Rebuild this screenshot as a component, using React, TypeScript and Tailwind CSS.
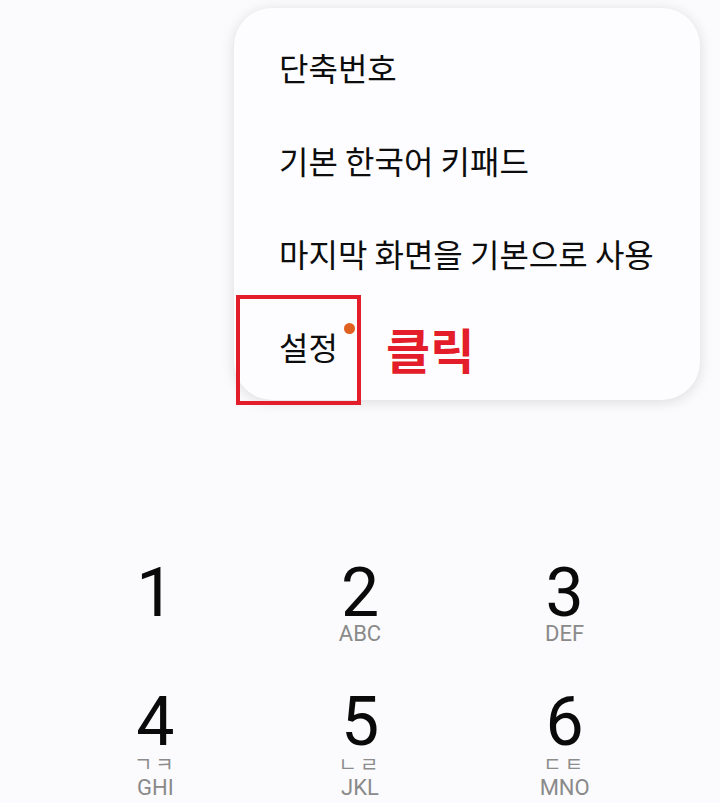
const menuItems = ["단축번호", "기본 한국어 키패드", "마지막 화면을 기본으로 사용", "설정"];

const keys = [
  { digit: "1", jamo: "", letters: "" },
  { digit: "2", jamo: "", letters: "ABC" },
  { digit: "3", jamo: "", letters: "DEF" },
  { digit: "4", jamo: "ㄱㅋ", letters: "GHI" },
  { digit: "5", jamo: "ㄴㄹ", letters: "JKL" },
  { digit: "6", jamo: "ㄷㅌ", letters: "MNO" },
];

function Key({ digit, jamo, letters }: { digit: string; jamo: string; letters: string }) {
  return (
    <div className="flex h-[129px] flex-col items-center">
      <span className="font-['Roboto',sans-serif] text-[68px] font-normal leading-[60px] text-[#0a0a0a]">
        {digit}
      </span>
      {jamo && (
        <span className="mt-[2px] font-['Noto_Sans_CJK_KR',sans-serif] text-[20px] leading-none tracking-[3px] text-[#8c8c8c]">
          {jamo}
        </span>
      )}
      {letters && (
        <span
          className={`font-['Roboto',sans-serif] text-[22px] leading-none text-[#8a8a8a] ${
            jamo ? "mt-[3px]" : "mt-0"
          }`}
        >
          {letters}
        </span>
      )}
    </div>
  );
}

export default function App() {
  return (
    <div className="relative h-[803px] w-[720px] overflow-hidden bg-[#fbfbfd]">
      <div className="absolute left-[234px] top-[8px] w-[466px] rounded-[38px] bg-[#fdfdff] pb-[8px] pt-[12px] shadow-[0_2px_14px_rgba(0,0,0,0.13)]">
        {menuItems.map((item, i) => (
          <div key={item} className="flex h-[93px] items-center pl-[45px]">
            <span className="relative font-['Noto_Sans_CJK_KR',sans-serif] text-[32px] leading-none text-[#0d0d0d]">
              {item}
              {i === 3 && (
                <span className="absolute -right-[17px] -top-[7px] h-[11px] w-[11px] rounded-full bg-[#e0601f]" />
              )}
            </span>
          </div>
        ))}
      </div>

      <div className="absolute left-[236px] top-[295px] h-[110px] w-[125px] border-[4px] border-[#e31e2a]" />
      <span className="absolute left-[386px] top-[324px] font-['Noto_Sans_CJK_KR',sans-serif] text-[48px] font-bold leading-none text-[#e31e2a]">
        클릭
      </span>

      <div className="grid grid-cols-3 px-[53px] pt-[563px]">
        {keys.map((k) => (
          <Key key={k.digit} {...k} />
        ))}
      </div>
    </div>
  );
}
